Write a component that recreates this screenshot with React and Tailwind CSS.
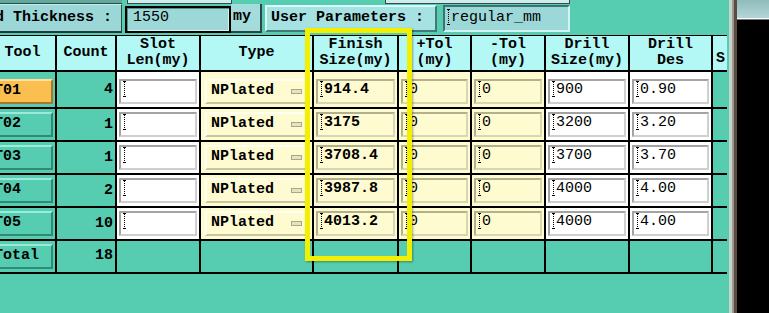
import React from "react";

const rows = [
  { tool: "T01", count: "4", finish: "914.4", drill: "900", des: "0.90", active: true },
  { tool: "T02", count: "1", finish: "3175", drill: "3200", des: "3.20" },
  { tool: "T03", count: "1", finish: "3708.4", drill: "3700", des: "3.70" },
  { tool: "T04", count: "2", finish: "3987.8", drill: "4000", des: "4.00" },
  { tool: "T05", count: "10", finish: "4013.2", drill: "4000", des: "4.00" },
];

const headers = [
  ["Tool"],
  ["Count"],
  ["Slot", "Len(my)"],
  ["Type"],
  ["Finish", "Size(my)"],
  ["+Tol", "(my)"],
  ["-Tol", "(my)"],
  ["Drill", "Size(my)"],
  ["Drill", "Des"],
];

function Cursor() {
  return (
    <svg width="5" height="16" viewBox="0 0 5 16" className="shrink-0">
      <path d="M1 0.5h3M1 15.5h3" stroke="#000" strokeWidth="1" />
      <path d="M2.5 1v14" stroke="#000" strokeWidth="1" strokeDasharray="1 1" />
    </svg>
  );
}

function Entry({ value, yellow, bold }) {
  const tone = yellow
    ? "border-t-[#b3b08e] border-l-[#b3b08e] border-b-[#d9d6b4] border-r-[#d9d6b4] bg-[#fffbd0]"
    : "border-t-[#a3a3a3] border-l-[#a3a3a3] border-b-[#cfcfcf] border-r-[#cfcfcf] bg-white";
  return (
    <div className={`flex h-[25px] w-full items-start border-2 pl-px ${tone}`}>
      <Cursor />
      <span className={`leading-[17px] ${bold ? "font-bold" : ""}`}>{value}</span>
    </div>
  );
}

function ToolButton({ label, active }) {
  const tone = active
    ? "border-t-[#ffdf9c] border-l-[#ffdf9c] border-b-[#a5782a] border-r-[#a5782a] bg-[#fbbf4f]"
    : "border-t-[#9cebd6] border-l-[#9cebd6] border-b-[#2f8c74] border-r-[#2f8c74] bg-[#56cdb1]";
  return (
    <div className={`flex h-[25px] w-full items-center border-2 pl-[1px] font-bold ${tone}`}>
      {label}
    </div>
  );
}

function TypeButton() {
  return (
    <div className="flex h-[25px] w-full items-center justify-between border-2 border-t-[#fffff2] border-l-[#fffff2] border-b-[#c9c5a2] border-r-[#c9c5a2] bg-[#fffbd0] pl-[4px] pr-[4px] font-bold">
      <span>NPlated</span>
      <span className="h-[5px] w-[11px] border border-[#aaa68a] bg-[#e7e3bf]" />
    </div>
  );
}

export default function App() {
  const cell = "flex items-end px-[2px] pb-[3px]";
  return (
    <div className="flex h-[313px] w-[769px] overflow-hidden bg-black font-['Liberation_Mono',monospace] text-[15px] text-black">
      <div className="relative w-[729px] shrink-0 overflow-hidden bg-[#56cdb1]">
        <div className="flex h-[4px]">
          <div className="w-[122px] border-b border-[#2c4a44] bg-[#63a89c]" />
          <div className="ml-[5px] w-[105px] border-x border-b border-[#3a4a4a] bg-[#cdeeee]" />
          <div className="ml-[153px] w-[185px] border-x border-b border-[#3a4a4a] bg-[#cdeeee]" />
        </div>

        <div className="flex h-[29px]">
          <div className="flex w-[122px] shrink-0 items-center justify-end overflow-hidden whitespace-nowrap border-t border-b-2 border-r border-t-[#c4eeee] border-b-[#1f3a3a] border-r-[#2b4a4a] bg-[#9bd7d7] pr-[9px] font-bold">
            Board Thickness :
          </div>
          <div className="ml-[3px] mt-[2px] h-[27px] w-[106px] shrink-0 border-2 border-black bg-[#9dd8d8] pl-[6px] pt-px leading-[17px] shadow-[inset_1px_1px_0_#5a8e8e,inset_-1px_-1px_0_#d0f4f4]">
            1550
          </div>
          <div className="flex w-[31px] shrink-0 items-center border-r-2 border-b-2 border-[#2a4646] bg-[#a4dcdc] pl-[2px] font-bold">
            my
          </div>
          <div className="my-px ml-[3px] flex w-[172px] shrink-0 items-center whitespace-pre border-2 border-t-[#d8fafa] border-l-[#d8fafa] border-b-[#3f7a78] border-r-[#3f7a78] bg-[#a7e2e2] pl-[4px] font-bold">
            User Parameters :
          </div>
          <div className="my-px ml-[6px] flex w-[127px] shrink-0 items-start border-2 border-t-[#3f7272] border-l-[#3f7272] border-b-[#d0f4f4] border-r-[#d0f4f4] bg-[#9dd8d8] pl-[1px] pt-[2px]">
            <Cursor />
            <span className="leading-[17px]">regular_mm</span>
          </div>
        </div>

        <div className="-ml-[10px] mt-[2px] grid w-[737px] grid-cols-[65px_58px_82px_111px_83px_71px_72px_82px_81px_14px] grid-rows-[34px_35px_31px_31px_31px_31px_31px] gap-[2px] border-t border-black bg-black pb-[2px]">
          {headers.map((h, i) => (
            <div key={i} className="flex flex-col justify-center bg-[#b4f8f6] text-center font-bold leading-[16px]">
              {h.map((line) => (
                <span key={line}>{line}</span>
              ))}
            </div>
          ))}
          <div className="flex items-end bg-[#b4f8f6] pb-[3px] pl-[3px] font-bold leading-[16px]">S</div>

          {rows.map((r) => (
            <React.Fragment key={r.tool}>
              <div className="flex items-end bg-[#56cdb1] pb-[3px] pl-px pr-[2px]">
                <ToolButton label={r.tool} active={r.active} />
              </div>
              <div className="flex items-center justify-end bg-[#56cdb1] pr-[2px] pt-[2px] font-bold">{r.count}</div>
              <div className={`${cell} bg-white`}>
                <Entry value="" />
              </div>
              <div className="flex items-end bg-[#fffbd0] pb-[3px] pl-[4px] pr-[4px]">
                <TypeButton />
              </div>
              <div className={`${cell} bg-[#fffbd0]`}>
                <Entry value={r.finish} yellow bold />
              </div>
              <div className={`${cell} bg-[#fffbd0]`}>
                <Entry value="0" yellow />
              </div>
              <div className={`${cell} bg-[#fffbd0]`}>
                <Entry value="0" yellow />
              </div>
              <div className={`${cell} bg-white`}>
                <Entry value={r.drill} />
              </div>
              <div className={`${cell} bg-white`}>
                <Entry value={r.des} />
              </div>
              <div className="bg-[#56cdb1]" />
            </React.Fragment>
          ))}

          <div className="flex items-end bg-[#56cdb1] pb-[3px] pl-px pr-[2px]">
            <ToolButton label="Total" />
          </div>
          <div className="flex items-center justify-end bg-[#56cdb1] pr-[2px] font-bold">18</div>
          {Array.from({ length: 8 }).map((_, i) => (
            <div key={i} className="bg-[#56cdb1]" />
          ))}
        </div>

        <div className="absolute left-[305px] top-[28px] h-[233px] w-[107px] border-[5px] border-[#f3ef00] shadow-[1px_1px_2px_rgba(0,0,0,0.35)]" />
      </div>

      <div className="w-[3px] shrink-0 bg-[#c9d2cb]" />
      <div className="w-[2px] shrink-0 bg-[#9a9890]" />
      <div className="w-[3px] shrink-0 bg-[#5b4c40]" />
      <div className="flex flex-1 flex-col">
        <div className="h-[18px] bg-gradient-to-b from-[#8fbcbc] to-[#b5d6d6]" />
        <div className="h-px bg-white" />
        <div className="h-px bg-[#777]" />
        <div className="flex-1 bg-black" />
      </div>
    </div>
  );
}
